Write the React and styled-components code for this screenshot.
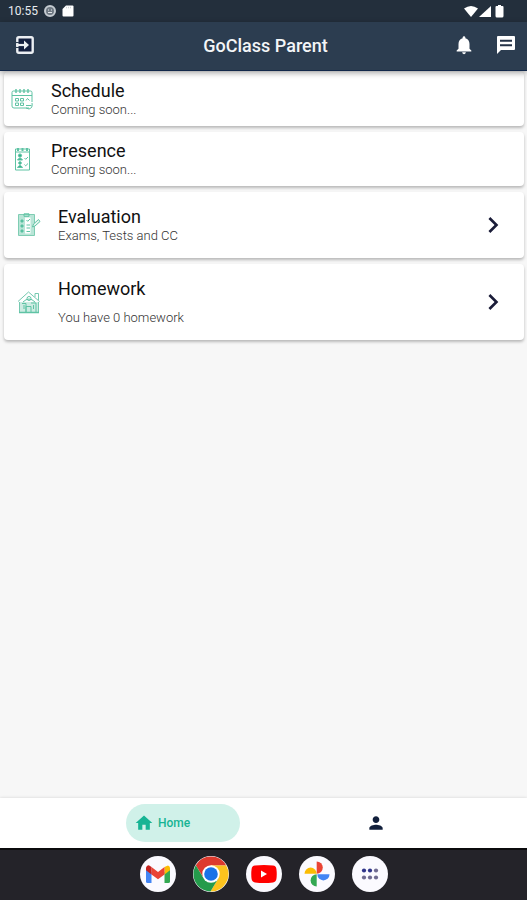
import React, { useState } from 'react';
import styled, { createGlobalStyle } from 'styled-components';
import { MdNotifications, MdHome, MdPerson, MdChevronRight } from 'react-icons/md';

const items = [
  { id: 'schedule', title: 'Schedule', text: 'Coming soon...', icon: CalendarIcon },
  { id: 'presence', title: 'Presence', text: 'Coming soon...', icon: PresenceIcon },
  { id: 'evaluation', title: 'Evaluation', text: 'Exams, Tests and CC', icon: EvaluationIcon, link: true },
  { id: 'homework', title: 'Homework', text: 'You have 0 homework', icon: HomeworkIcon, link: true, tall: true },
];

const App = () => {
  const [tab, setTab] = useState('home');

  return (
    <Page>
      <GlobalStyle />
      <StatusBar>
        <StatusGroup>
          <span>10:55</span>
          <BadgeIcon />
          <SdCardIcon />
        </StatusGroup>
        <SignalIcons />
      </StatusBar>

      <AppBar>
        <BarSide>
          <BarButton aria-label="Log out"><ExitIcon /></BarButton>
        </BarSide>
        <BarTitle>GoClass Parent</BarTitle>
        <BarSide $end>
          <BarButton aria-label="Notifications"><MdNotifications /></BarButton>
          <BarButton aria-label="Messages"><MessageIcon /></BarButton>
        </BarSide>
      </AppBar>

      <List>
        {items.map(({ id, title, text, icon: Icon, link, tall }) => (
          <Card key={id} as={link ? 'a' : 'div'} href={link ? '#' + id : undefined} $link={link}>
            <Icon />
            <CardBody $tall={tall}>
              <CardTitle>{title}</CardTitle>
              <CardText>{text}</CardText>
            </CardBody>
            {link && <MdChevronRight size={32} color="#1a1c38" />}
          </Card>
        ))}
      </List>

      <TabBar>
        <Tab $active={tab === 'home'} aria-label="Home" onClick={() => setTab('home')}>
          <MdHome />
          {tab === 'home' && <span>Home</span>}
        </Tab>
        <Tab $active={tab === 'profile'} aria-label="Profile" onClick={() => setTab('profile')}>
          <MdPerson />
          {tab === 'profile' && <span>Profile</span>}
        </Tab>
      </TabBar>

      <Dock>
        <DockButton aria-label="Gmail"><GmailLogo /></DockButton>
        <DockButton aria-label="Chrome"><ChromeLogo /></DockButton>
        <DockButton aria-label="YouTube"><YoutubeLogo /></DockButton>
        <DockButton aria-label="Photos"><PhotosLogo /></DockButton>
        <DockButton aria-label="All apps"><AppsLogo /></DockButton>
      </Dock>
    </Page>
  );
};

export default App;

/* status bar icons */

function BadgeIcon() {
  return (
    <svg width="12" height="12" viewBox="0 0 12 12">
      <circle cx="6" cy="6" r="5" fill="#6f7983" stroke="#c5cbd1" strokeWidth="2" />
      <path d="M4 5h1M7 5h1M4 7.500h4" stroke="#e3e6e9" strokeWidth="1" />
    </svg>
  );
}

function SdCardIcon() {
  return (
    <svg width="12" height="12" viewBox="0 0 12 12">
      <path d="M4 0.500h6.500q1 0 1 1v9q0 1-1 1h-9q-1 0-1-1V4z" fill="#fff" />
      <path d="M4.500 1.800v1.500M6.500 1.800v1.500M8.500 1.800v1.500" stroke="#c3c8cc" strokeWidth="0.800" />
    </svg>
  );
}

function SignalIcons() {
  return (
    <svg width="41" height="13" viewBox="0 0 41 13">
      <path d="M0 3.500Q7 -1.500 14 3.500L7 12z" fill="#fff" />
      <path d="M15 12L27 1v11z" fill="#fff" />
      <path d="M34 0h3v1h1.500q1 0 1 1v9q0 1.500-1.500 1.500h-5q-1.500 0-1.500-1.500V2q0-1 1-1H34z" fill="#fff" />
    </svg>
  );
}

function ExitIcon() {
  return (
    <svg width="18" height="18" viewBox="0 0 18 18" fill="none">
      <rect x="1.300" y="1.300" width="15.400" height="15.400" rx="1.500" fill="#14203f" stroke="#eceff2" strokeWidth="2.400" />
      <path d="M0 9h10" stroke="#eceff2" strokeWidth="2.200" />
      <path d="M8 4.500L13 9l-5 4.500z" fill="#eceff2" />
      <path d="M0 6.500h3M0 11.500h3" stroke="#2c3d50" strokeWidth="1" />
    </svg>
  );
}

function MessageIcon() {
  return (
    <svg width="20" height="20" viewBox="0 0 20 20">
      <path d="M2 1h16q1 0 1 1v12q0 1-1 1H5l-4 4V2q0-1 1-1z" fill="#fff" />
      <path d="M4 5.800h12M4 10.200h12" stroke="#243247" strokeWidth="2" />
    </svg>
  );
}

/* card icons */

function CalendarIcon() {
  return (
    <LineIcon viewBox="0 0 24 24">
      <path d="M19 21H4q-2 0-2-2V5.500q0-1.500 1.500-1.500h17Q22 4 22 5.500V15M2 8.500h20" />
      <path d="M6 2v4M10 2v4M14 2v4M18 2v4" strokeWidth="1.400" />
      <path d="M5.500 11.500h3v2.500h-3zM10.500 11.500h3v2.500h-3zM5.500 16h3v2.500h-3zM10.500 16h3v2.500h-3z" />
      <path d="M16 13.500l1.500-2 2 2M16 18.500h5.500M22 16q1 5-3 6l-3-1" />
    </LineIcon>
  );
}

function PresenceIcon() {
  return (
    <LineIcon viewBox="0 0 24 24">
      <path d="M5.500 2h14v21h-14zM5.500 5h14" />
      <path d="M8 1v3M12.500 1v3M17 1v3" strokeWidth="2" />
      <circle cx="10" cy="8.500" r="1.600" fill="#35b18c" />
      <path d="M7.500 13q2.500-4 5 0zM7.500 20.500q2.500-4 5 0z" fill="#35b18c" />
      <circle cx="10" cy="16" r="1.300" fill="#35b18c" />
      <path d="M14.500 11l1.200 1.300L18 10M14.500 17.500l1.200 1.300 2.300-2.300" />
    </LineIcon>
  );
}

function EvaluationIcon() {
  return (
    <LineIcon viewBox="0 0 24 24">
      <path d="M1.500 1.500h16v21h-16z" fill="#b9e5d7" stroke="#7fcdb3" />
      <path d="M8 4.500h5.500v16H8z" fill="#fff" stroke="none" />
      <path d="M7 .8h5v2.500H7zM9.500 7l1.200 1.300L13 6M9.500 12h3.500M9.500 15h3.500M9.500 18.500h3.500" />
      <path d="M4 7h2v2H4zM4 12h2v2H4zM4 17h2v2H4z" fill="#43b792" />
      <path d="M15.500 14l1-3 5-4.500 1.500 2-5 4.500z" fill="#e5f6f0" />
    </LineIcon>
  );
}

function HomeworkIcon() {
  return (
    <LineIcon viewBox="0 0 24 24">
      <path d="M1 11.500L11.500 2l11 9.500M18 7V3.500h3.500V10" stroke="#75c9b0" />
      <path d="M2.500 12v10.500h19V12" fill="#cdece2" stroke="#75c9b0" />
      <path d="M5 13.500h4v9M9 22.500v-6h5v6M14 13h5v9.500M6 12q6-6 12 0M7 15v4M16.500 15v4" />
      <circle cx="12" cy="8.500" r="2" />
      <path d="M2 22.500h20" strokeWidth="1.500" />
    </LineIcon>
  );
}

/* dock logos */

function GmailLogo() {
  return (
    <svg width="24" height="18" viewBox="0 0 24 18">
      <path d="M0 3v13.400Q0 18 1.600 18H5.500V7z" fill="#4285f4" />
      <path d="M24 3v13.400Q24 18 22.400 18H18.500V7z" fill="#34a853" />
      <path d="M18.500 2v7.500L24 5.300V3q0-2-2-2.500z" fill="#fbbc04" />
      <path d="M5.500 9.500V2L12 7l6.500-5v7.500L12 14.300z" fill="#ea4335" />
      <path d="M0 3v2.300l5.500 4.200V2L4 .9Q2.500-.2 1 .9 0 1.700 0 3z" fill="#c5221f" />
    </svg>
  );
}

function ChromeLogo() {
  return (
    <svg width="36" height="36" viewBox="0 0 36 36">
      <path d="M18 18V9.500h15.200A17.500 17.500 0 0 0 2.800 9.300L10.700 22.300z" fill="#dd3a2e" />
      <path d="M18 9.500h15.200A17.500 17.500 0 0 1 17.500 35.500L25.400 22.300z" fill="#fcc31e" />
      <path d="M25.400 22.300L17.500 35.500A17.500 17.500 0 0 1 2.800 9.300L10.600 22.300z" fill="#249b4b" />
      <circle cx="18" cy="18" r="8.700" fill="#fff" />
      <circle cx="18" cy="18" r="6.800" fill="#1a73e8" />
    </svg>
  );
}

function YoutubeLogo() {
  return (
    <svg width="26" height="18" viewBox="0 0 26 18">
      <path d="M4 .6Q13-.5 22 .6 25 1 25.400 4q.7 5 0 10-.4 3-3.400 3.400-9 1.100-18 0Q1 17 .6 14q-.7-5 0-10Q1 1 4 .6z" fill="#f00" />
      <path d="M10 5.500l6 3.500-6 3.500z" fill="#fff" />
    </svg>
  );
}

function PhotosLogo() {
  return (
    <svg width="26" height="26" viewBox="0 0 26 26">
      <path d="M12.700 0.500a6 6 0 0 1 0 12.200z" fill="#ea4335" />
      <path d="M25.500 13.300a6 6 0 0 1-12.200 0z" fill="#4285f4" />
      <path d="M12.700 25.500a6 6 0 0 1 0-12.200z" fill="#34a853" />
      <path d="M0.500 12.700a6 6 0 0 1 12.200 0z" fill="#fbbc04" />
    </svg>
  );
}

function AppsLogo() {
  return (
    <svg width="18" height="12" viewBox="0 0 18 12">
      <g fill="#30358a">
        <circle cx="3" cy="2.500" r="2.100" />
        <circle cx="9" cy="2.500" r="2.100" />
      </g>
      <g fill="#706b91">
        <circle cx="15" cy="2.500" r="2.100" />
        <circle cx="3" cy="9.500" r="2.100" />
        <circle cx="9" cy="9.500" r="2.100" />
        <circle cx="15" cy="9.500" r="2.100" />
      </g>
    </svg>
  );
}

const GlobalStyle = createGlobalStyle`
  * {
    box-sizing: border-box;
  }
  body {
    margin: 0;
    font-family: Roboto, "Liberation Sans", sans-serif;
    background: #f7f7f7;
  }
  button {
    border: none;
    padding: 0;
    background: transparent;
    font-family: inherit;
    cursor: pointer;
  }
`;

const Page = styled.div`
  min-height: 100vh;
  display: flex;
  flex-direction: column;
`;

const StatusBar = styled.div`
  height: 22px;
  padding: 0 22px 0 8px;
  display: flex;
  align-items: center;
  justify-content: space-between;
  background: #232f3c;
  color: #e8ebee;
  font-size: 12px;
`;

const StatusGroup = styled.div`
  display: flex;
  align-items: center;
  gap: 6px;
`;

const AppBar = styled.header`
  position: relative;
  height: 49px;
  padding: 0 9px 2px 13px;
  display: flex;
  align-items: center;
  background: #2c3d50;
  border-bottom: 1px solid #12284a;
  box-shadow: 0 2px 6px rgba(0, 0, 0, 0.35);
`;

const BarSide = styled.div`
  flex: 1;
  display: flex;
  gap: 18px;
  justify-content: ${(props) => (props.$end ? 'flex-end' : 'flex-start')};
`;

const BarButton = styled.button`
  min-width: 24px;
  height: 24px;
  display: flex;
  align-items: center;
  justify-content: center;
  color: #fff;
  font-size: 22px;
`;

const BarTitle = styled.h1`
  margin: 0;
  font-size: 18px;
  font-weight: 500;
  color: #f3f5f7;
`;

const List = styled.main`
  flex: 1;
  padding: 1px 3px 8px 4px;
  display: flex;
  flex-direction: column;
  gap: 6px;
`;

const Card = styled.div`
  padding: ${(props) => (props.$link ? '14px 15px 14px 13px' : '8px 15px 8px 6px')};
  display: flex;
  align-items: center;
  gap: 17px;
  background: #fff;
  border-radius: 4px;
  box-shadow: 0 2px 3px rgba(0, 0, 0, 0.25);
  color: #111;
  text-decoration: none;
`;

const LineIcon = styled.svg`
  width: 24px;
  height: 24px;
  flex: none;
  fill: none;
  stroke: #5fc3a4;
  stroke-width: 1;
`;

const CardBody = styled.div`
  flex: 1;
  display: flex;
  flex-direction: column;
  gap: ${(props) => (props.$tall ? '10px' : '0')};
`;

const CardTitle = styled.h2`
  margin: 0;
  font-size: 18px;
  line-height: 22px;
  font-weight: 400;
`;

const CardText = styled.p`
  margin: 0;
  font-size: 13px;
  line-height: 16px;
  font-weight: 300;
  color: #333;
`;

const TabBar = styled.nav`
  height: 50px;
  padding: 0 15px 0 8px;
  display: flex;
  align-items: center;
  justify-content: space-evenly;
  background: #fff;
  box-shadow: 0 0 3px rgba(0, 0, 0, 0.15);
`;

const Tab = styled.button`
  width: ${(props) => (props.$active ? '114px' : '36px')};
  height: 38px;
  padding: 0 8px;
  display: flex;
  align-items: center;
  gap: 4px;
  border-radius: 19px;
  background: ${(props) => (props.$active ? '#d0f1e9' : 'transparent')};
  color: ${(props) => (props.$active ? '#17b494' : '#12203c')};
  font-size: 12px;
  font-weight: 500;
  svg {
    flex: none;
    font-size: 20px;
  }
`;

const Dock = styled.footer`
  height: 52px;
  padding-bottom: 2px;
  display: flex;
  align-items: center;
  justify-content: center;
  gap: 17px;
  background: #242329;
  border-top: 2px solid #0b0b0d;
`;

const DockButton = styled.button`
  width: 36px;
  height: 36px;
  display: flex;
  align-items: center;
  justify-content: center;
  border-radius: 50%;
  background: #fbfaff;
`;
